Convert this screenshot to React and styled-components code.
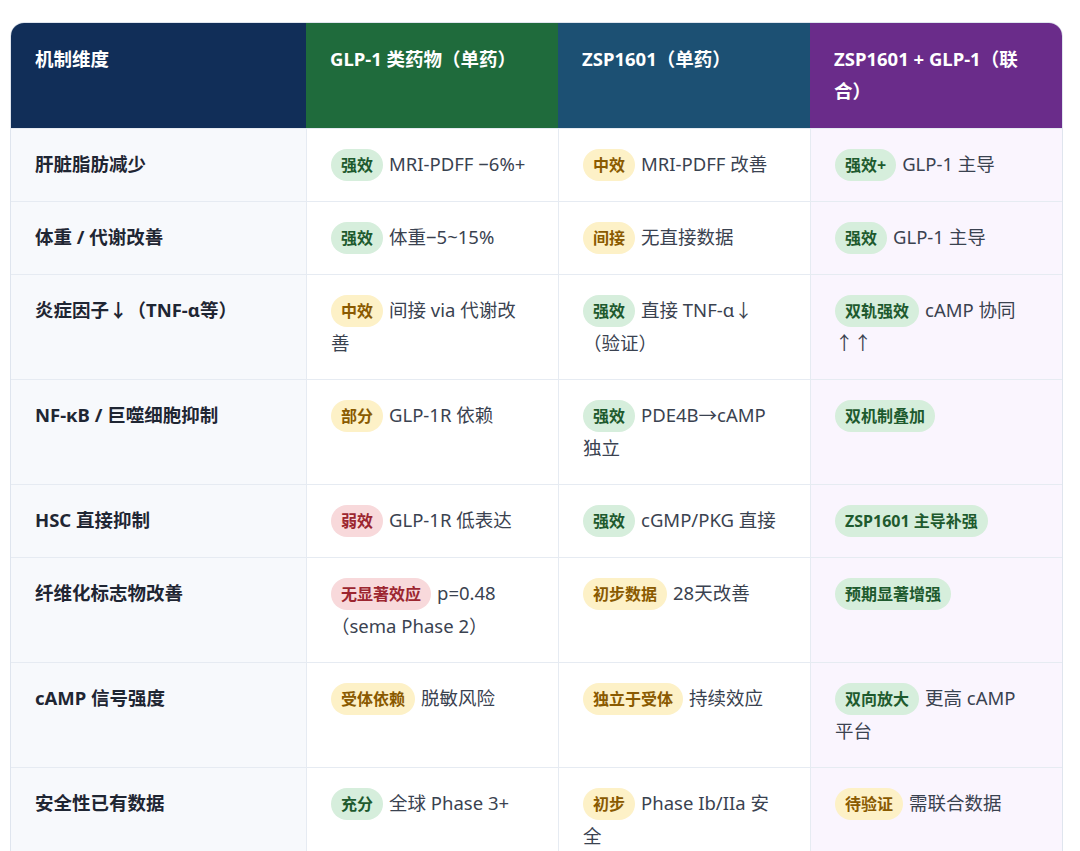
import styled, { createGlobalStyle } from "styled-components";

const Global = createGlobalStyle`
  body {
    margin: 0;
    background: #fff;
    font-family: "Noto Sans", "Noto Sans CJK SC", sans-serif;
  }
`;

const Wrap = styled.div`
  padding: 22px 19px 20px 10px;
`;

const Table = styled.table`
  width: 1051px;
  border-collapse: separate;
  border-spacing: 0;
  border: 1px solid #dfe5ee;
  border-radius: 14px;
  overflow: hidden;
  table-layout: fixed;
  font-size: 18.5px;
  line-height: 32px;
`;

const Col = styled.col`
  width: ${(p) => p.$w}px;
`;

const headBg = ["#112e58", "#1f6b3c", "#1c5073", "#6a2c8a"];

const Th = styled.th`
  background: ${(p) => headBg[p.$i]};
  color: #fff;
  font-weight: 700;
  text-align: left;
  vertical-align: top;
  padding: 20px 24px 21px 24px;
  height: 64px;
`;

const Td = styled.td`
  vertical-align: top;
  padding: 19px 24px 20px 24px;
  color: #3a4250;
  border-top: 1px solid #e6ebf2;
  border-left: ${(p) => (p.$i === 0 ? "none" : "1px solid #e6ebf2")};
  background: ${(p) => (p.$i === 0 ? "#f7f9fc" : p.$i === 3 ? "#faf5fe" : "#fff")};
  font-weight: ${(p) => (p.$i === 0 ? 700 : 400)};
  ${(p) => p.$i === 0 && "color: #1f2633;"}
`;

const badgeColors = {
  g: ["#d6eedc", "#1e5a2e"],
  y: ["#fdf1c7", "#8a5a00"],
  r: ["#f8d9db", "#9c2630"],
};

const Badge = styled.span`
  display: inline-block;
  background: ${(p) => badgeColors[p.$c][0]};
  color: ${(p) => badgeColors[p.$c][1]};
  font-weight: 700;
  font-size: 16px;
  line-height: 24px;
  padding: 4px 10px;
  border-radius: 16px;
  margin-right: 6px;
`;

const heads = ["机制维度", "GLP-1 类药物（单药）", "ZSP1601（单药）", "ZSP1601 + GLP-1（联合）"];
const widths = [295, 252, 252, 252];

const rows = [
  ["肝脏脂肪减少", ["g", "强效", "MRI-PDFF −6%+"], ["y", "中效", "MRI-PDFF 改善"], ["g", "强效+", "GLP-1 主导"]],
  ["体重 / 代谢改善", ["g", "强效", "体重−5~15%"], ["y", "间接", "无直接数据"], ["g", "强效", "GLP-1 主导"]],
  ["炎症因子↓（TNF-α等）", ["y", "中效", "间接 via 代谢改善"], ["g", "强效", "直接 TNF-α↓（验证）"], ["g", "双轨强效", "cAMP 协同↑↑"]],
  ["NF-κB / 巨噬细胞抑制", ["y", "部分", "GLP-1R 依赖"], ["g", "强效", "PDE4B→cAMP 独立"], ["g", "双机制叠加", ""]],
  ["HSC 直接抑制", ["r", "弱效", "GLP-1R 低表达"], ["g", "强效", "cGMP/PKG 直接"], ["g", "ZSP1601 主导补强", ""]],
  ["纤维化标志物改善", ["r", "无显著效应", "p=0.48（sema Phase 2）"], ["y", "初步数据", "28天改善"], ["g", "预期显著增强", ""]],
  ["cAMP 信号强度", ["y", "受体依赖", "脱敏风险"], ["y", "独立于受体", "持续效应"], ["g", "双向放大", "更高 cAMP 平台"]],
  ["安全性已有数据", ["g", "充分", "全球 Phase 3+"], ["y", "初步", "Phase Ib/IIa 安全"], ["y", "待验证", "需联合数据"]],
];

export default function App() {
  return (
    <Wrap>
      <Global />
      <Table>
        <colgroup>
          {widths.map((w, i) => (
            <Col key={i} $w={w} />
          ))}
        </colgroup>
        <thead>
          <tr>
            {heads.map((h, i) => (
              <Th key={i} $i={i}>{h}</Th>
            ))}
          </tr>
        </thead>
        <tbody>
          {rows.map((r, ri) => (
            <tr key={ri}>
              <Td $i={0}>{r[0]}</Td>
              {r.slice(1).map(([c, b, t], ci) => (
                <Td key={ci} $i={ci + 1}>
                  <Badge $c={c}>{b}</Badge>
                  {t}
                </Td>
              ))}
            </tr>
          ))}
        </tbody>
      </Table>
    </Wrap>
  );
}
